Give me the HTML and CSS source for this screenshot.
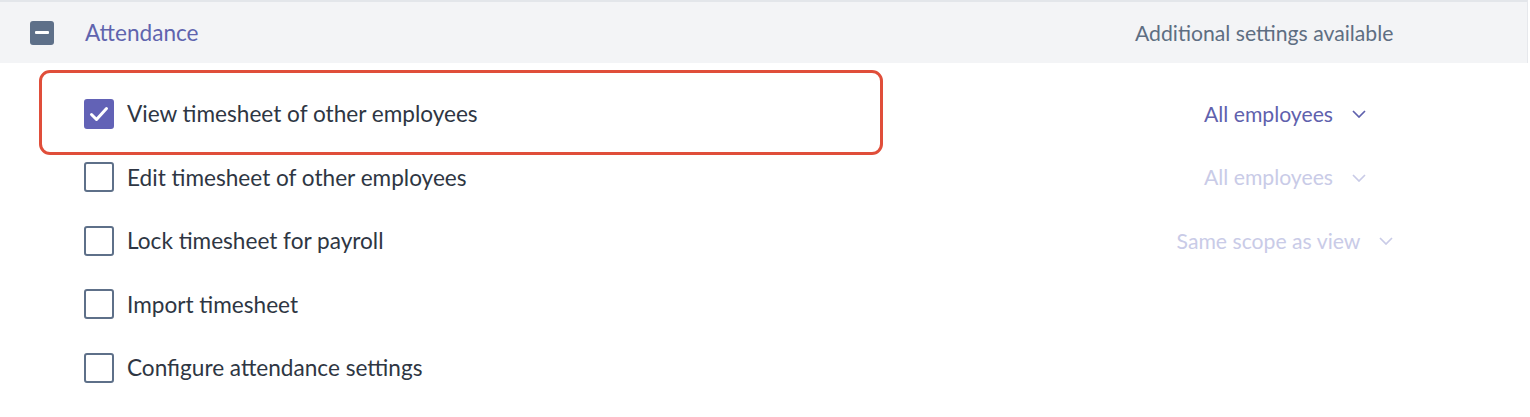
FILE: index.html
```html
<!DOCTYPE html>
<html lang="en">
<head>
<meta charset="utf-8">
<title>Attendance permissions</title>
<link rel="stylesheet" href="styles.css">
</head>
<body>
<section class="perm">
  <div class="perm-head">
    <span class="mbox"><span class="mbar"></span></span>
    <span class="perm-title">Attendance</span>
    <span class="perm-extra">Additional settings available</span>
  </div>
  <div class="perm-list">
    <div class="highlight"></div>
    <div class="row">
      <span class="cb checked"><svg viewBox="0 0 30 30" width="30" height="30"><path d="M7.5 15.5 L12.5 20.5 L22.5 9.5" fill="none" stroke="#fff" stroke-width="3" stroke-linecap="round" stroke-linejoin="round"/></svg></span>
      <span class="label">View timesheet of other employees</span>
      <span class="scope"><span class="dd active">All employees<svg class="chev" viewBox="0 0 14 8" width="14" height="8"><path d="M1 1 L7 7 L13 1" fill="none" stroke="currentColor" stroke-width="1.7"/></svg></span></span>
    </div>
    <div class="row">
      <span class="cb"></span>
      <span class="label">Edit timesheet of other employees</span>
      <span class="scope"><span class="dd muted">All employees<svg class="chev" viewBox="0 0 14 8" width="14" height="8"><path d="M1 1 L7 7 L13 1" fill="none" stroke="currentColor" stroke-width="1.7"/></svg></span></span>
    </div>
    <div class="row">
      <span class="cb"></span>
      <span class="label">Lock timesheet for payroll</span>
      <span class="scope"><span class="dd muted">Same scope as view<svg class="chev" viewBox="0 0 14 8" width="14" height="8"><path d="M1 1 L7 7 L13 1" fill="none" stroke="currentColor" stroke-width="1.7"/></svg></span></span>
    </div>
    <div class="row">
      <span class="cb"></span>
      <span class="label">Import timesheet</span>
      <span class="scope"></span>
    </div>
    <div class="row">
      <span class="cb"></span>
      <span class="label">Configure attendance settings</span>
      <span class="scope"></span>
    </div>
  </div>
</section>
</body>
</html>
```

FILE: styles.css
```css
* { box-sizing: border-box; }
html, body { margin: 0; padding: 0; background: #fff; }
body { font-family: Lato, "Open Sans", sans-serif; color: #2e3643; }

.perm-head {
  display: flex;
  align-items: center;
  height: 63px;
  border-top: 2px solid #e3e6ea;
  border-right: 1px solid #e6e8ec;
  margin-right: 2px;
  background: #f3f4f6;
  padding: 0 92px 0 30px;
}
.mbox {
  width: 24px;
  height: 24px;
  border-radius: 3px;
  background: #5e7089;
  display: flex;
  align-items: center;
  justify-content: center;
  flex: none;
}
.mbar { width: 14px; height: 3px; background: #fff; border-radius: 1px; }
.perm-title {
  margin-left: 31px;
  font-size: 22.6px;
  color: #6064ae;
  flex: 1;
}
.perm-extra {
  width: 300px;
  font-size: 21.2px;
  color: #5e6e82;
}

.perm-list {
  position: relative;
  padding: 19px 95px 0 84px;
}
.highlight {
  position: absolute;
  left: 39px;
  top: 7px;
  width: 844px;
  height: 85px;
  border: 3px solid #e04e3a;
  border-radius: 11px;
  pointer-events: none;
}
.row {
  display: flex;
  align-items: center;
  height: 63.5px;
}
.cb {
  width: 30px;
  height: 30px;
  border: 2.5px solid #5e7089;
  border-radius: 3px;
  flex: none;
  display: flex;
  align-items: center;
  justify-content: center;
}
.cb.checked { background: #6262b6; border-color: #6262b6; }
.cb.checked svg { flex: none; }
.label {
  margin-left: 13px;
  font-size: 22.6px;
  color: #2e3643;
  flex: 1;
}
.scope {
  width: 300px;
  display: flex;
  justify-content: center;
}
.dd {
  display: inline-flex;
  align-items: center;
  font-size: 21.2px;
  gap: 19px;
}
.dd.active { color: #5f61ad; }
.dd.muted { color: #c9cbe7; }
.chev { margin-top: 1px; }
```
